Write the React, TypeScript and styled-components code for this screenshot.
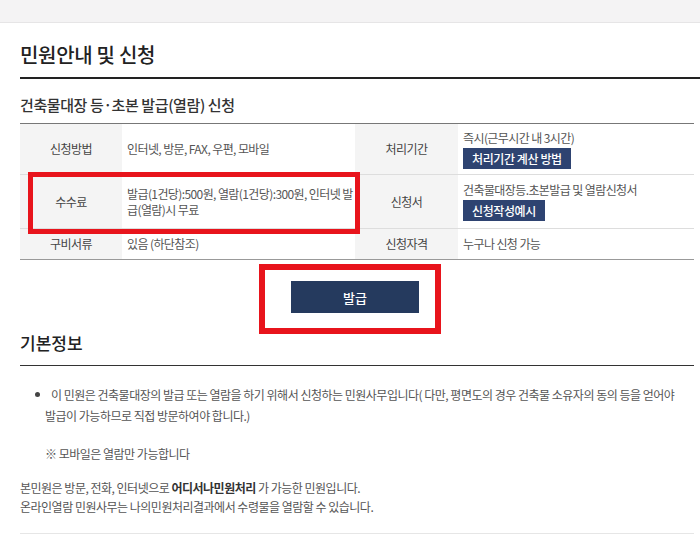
import styled, { createGlobalStyle } from "styled-components";

const GlobalStyle = createGlobalStyle`
  html, body {
    margin: 0;
    padding: 0;
    background: #fff;
  }
  body {
    font-family: "Noto Sans CJK KR", "Noto Sans", sans-serif;
    color: #555;
  }
`;

const TopBar = styled.div`
  height: 22px;
  background: #f4f3f4;
  border-bottom: 1px solid #e6e5e6;
`;

const Content = styled.div`
  padding: 0 6px 0 20px;
`;

const PageTitle = styled.h1`
  margin: 17px -6px 0 0;
  padding-bottom: 7px;
  border-bottom: 2px solid #222;
  font-size: 20px;
  line-height: 30px;
  font-weight: 500;
  color: #222;
  letter-spacing: -0.3px;
`;

const SubTitle = styled.h2`
  margin: 16px 0 0;
  padding-bottom: 8px;
  font-size: 15px;
  line-height: 20px;
  font-weight: 500;
  color: #333;
  letter-spacing: -0.4px;
`;

const Table = styled.div`
  position: relative;
  display: grid;
  grid-template-columns: 102px 233px 103px 1fr;
  border-top: 1px solid #777;
  border-bottom: 1px solid #999;
`;

const Cell = styled.div<{ $h: number; $label?: boolean; $last?: boolean }>`
  height: ${(p) => p.$h}px;
  box-sizing: border-box;
  border-bottom: ${(p) => (p.$last ? "none" : "1px solid #ddd")};
  display: flex;
  flex-direction: column;
  justify-content: center;
  align-items: ${(p) => (p.$label ? "center" : "flex-start")};
  padding-left: ${(p) => (p.$label ? 0 : 5)}px;
  background: ${(p) => (p.$label ? "#f4f4f4" : "#fff")};
  font-size: 12px;
  line-height: 16px;
  color: ${(p) => (p.$label ? "#444" : "#555")};
  letter-spacing: -0.6px;
`;

const SmallButton = styled.span`
  display: inline-block;
  margin-top: 2px;
  padding: 0 9px;
  height: 21px;
  line-height: 21px;
  background: #2e4371;
  color: #fff;
  font-size: 12px;
  font-weight: 500;
  letter-spacing: -0.4px;
`;

const Highlight = styled.div`
  position: absolute;
  left: 8px;
  top: 48px;
  width: 332px;
  height: 62px;
  box-sizing: border-box;
  border: 5px solid #e8141c;
  pointer-events: none;
`;

const ButtonRow = styled.div`
  display: flex;
  justify-content: center;
  margin: 4px -6px 0 -20px;
`;

const ButtonFrame = styled.div`
  border: 6px solid #e8141c;
  padding: 11px 16px 15px 26px;
`;

const IssueButton = styled.button`
  width: 128px;
  height: 32px;
  border: none;
  background: #253a5e;
  color: #fff;
  font-family: inherit;
  font-size: 13px;
  font-weight: 500;
`;

const SectionTitle = styled.h3`
  margin: -2px 0 0;
  padding-bottom: 11px;
  border-bottom: 1px solid #333;
  font-size: 17px;
  line-height: 22px;
  font-weight: 500;
  color: #222;
`;

const BulletList = styled.ul`
  margin: 18px 0 0;
  padding: 0 0 0 25px;
  list-style: none;
`;

const BulletItem = styled.li`
  position: relative;
  font-size: 12px;
  line-height: 21px;
  color: #555;
  letter-spacing: -0.5px;
  &::before {
    content: "";
    position: absolute;
    left: -10px;
    top: 8px;
    width: 5px;
    height: 5px;
    border-radius: 50%;
    background: #444;
  }
`;

const BulletText = styled.span`
  padding-left: 6px;
`;

const Note = styled.p`
  margin: 18px 0 0 25px;
  font-size: 12px;
  line-height: 20px;
  color: #555;
  letter-spacing: -0.5px;
`;

const Info = styled.div`
  margin-top: 14px;
  padding-bottom: 17px;
  border-bottom: 1px solid #e6e6e6;
  font-size: 12px;
  line-height: 19px;
  color: #555;
  letter-spacing: -0.5px;
  strong {
    color: #333;
    font-weight: 700;
  }
`;

const rows = [
  { h: 51 },
  { h: 54 },
  { h: 30 },
];

export default function App() {
  return (
    <>
      <GlobalStyle />
      <TopBar />
      <Content>
        <PageTitle>민원안내 및 신청</PageTitle>
        <SubTitle>건축물대장 등·초본 발급(열람) 신청</SubTitle>
        <Table>
          <Cell $h={rows[0].h} $label>신청방법</Cell>
          <Cell $h={rows[0].h}>인터넷, 방문, FAX, 우편, 모바일</Cell>
          <Cell $h={rows[0].h} $label>처리기간</Cell>
          <Cell $h={rows[0].h}>
            <span>즉시(근무시간 내 3시간)</span>
            <SmallButton>처리기간 계산 방법</SmallButton>
          </Cell>

          <Cell $h={rows[1].h} $label>수수료</Cell>
          <Cell $h={rows[1].h}>
            <span>
              발급(1건당):500원, 열람(1건당):300원, 인터넷 발<br />
              급(열람)시 무료
            </span>
          </Cell>
          <Cell $h={rows[1].h} $label>신청서</Cell>
          <Cell $h={rows[1].h}>
            <span>건축물대장등.초본발급 및 열람신청서</span>
            <SmallButton>신청작성예시</SmallButton>
          </Cell>

          <Cell $h={rows[2].h} $label $last>구비서류</Cell>
          <Cell $h={rows[2].h} $last>있음 (하단참조)</Cell>
          <Cell $h={rows[2].h} $label $last>신청자격</Cell>
          <Cell $h={rows[2].h} $last>누구나 신청 가능</Cell>

          <Highlight />
        </Table>

        <ButtonRow>
          <ButtonFrame>
            <IssueButton>발급</IssueButton>
          </ButtonFrame>
        </ButtonRow>

        <SectionTitle>기본정보</SectionTitle>
        <BulletList>
          <BulletItem>
            <BulletText>
              이 민원은 건축물대장의 발급 또는 열람을 하기 위해서 신청하는 민원사무입니다( 다만, 평면도의 경우 건축물 소유자의 동의 등을 얻어야
            </BulletText>
            <br />
            발급이 가능하므로 직접 방문하여야 합니다.)
          </BulletItem>
        </BulletList>
        <Note>※ 모바일은 열람만 가능합니다</Note>
        <Info>
          본민원은 방문, 전화, 인터넷으로 <strong>어디서나민원처리</strong> 가 가능한 민원입니다.
          <br />
          온라인열람 민원사무는 나의민원처리결과에서 수령물을 열람할 수 있습니다.
        </Info>
      </Content>
    </>
  );
}
